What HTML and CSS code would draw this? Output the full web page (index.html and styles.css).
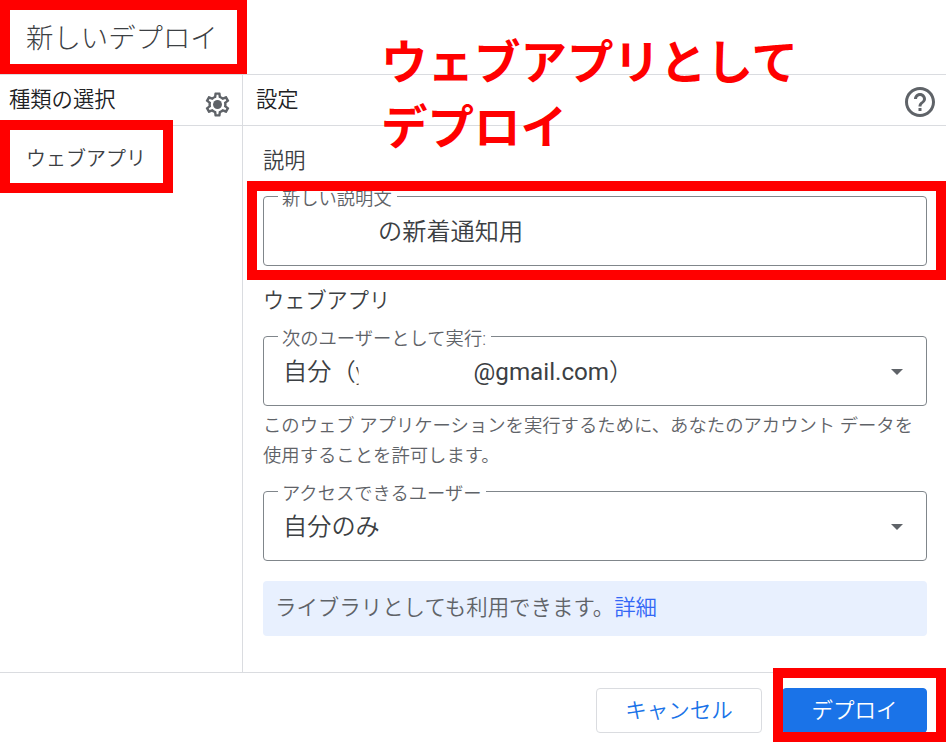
FILE: index.html
```html
<!DOCTYPE html>
<html lang="ja">

<head>
    <meta charset="UTF-8">
    <meta name="viewport" content="width=device-width, initial-scale=1.0">
    <title>新しいデプロイ</title>
    <link rel="stylesheet" href="styles.css">
</head>

<body>
    <div class="dialog">
        <header class="dialog-header">
            <h1>新しいデプロイ</h1>
        </header>
        <div class="dialog-body">
            <aside class="types">
                <div class="bar">
                    <h2>種類の選択</h2>
                    <svg class="gear" viewBox="0 0 24 24">
                        <path d="M19.43 12.98c.04-.32.07-.64.07-.98s-.03-.66-.07-.98l2.11-1.65c.19-.15.24-.42.12-.64l-2-3.46c-.09-.16-.26-.25-.44-.25-.06 0-.12.01-.17.03l-2.49 1c-.52-.4-1.08-.73-1.69-.98l-.38-2.65C14.46 2.18 14.25 2 14 2h-4c-.25 0-.46.18-.49.42l-.38 2.65c-.61.25-1.17.59-1.69.98l-2.49-1c-.06-.02-.12-.03-.18-.03-.17 0-.34.09-.43.25l-2 3.46c-.13.22-.07.49.12.64l2.11 1.65c-.04.32-.07.65-.07.98s.03.66.07.98l-2.11 1.65c-.19.15-.24.42-.12.64l2 3.46c.09.16.26.25.44.25.06 0 .12-.01.17-.03l2.49-1c.52.4 1.08.73 1.69.98l.38 2.65c.03.24.24.42.49.42h4c.25 0 .46-.18.49-.42l.38-2.65c.61-.25 1.17-.59 1.69-.98l2.49 1c.06.02.12.03.18.03.17 0 .34-.09.43-.25l2-3.46c.12-.22.07-.49-.12-.64l-2.11-1.65zm-1.98-1.71c.04.31.05.52.05.73 0 .21-.02.43-.05.73l-.14 1.13.89.7 1.08.84-.7 1.21-1.27-.51-1.04-.42-.9.68c-.43.32-.84.56-1.25.73l-1.06.43-.16 1.13-.2 1.35h-1.4l-.19-1.35-.16-1.13-1.06-.43c-.43-.18-.83-.41-1.23-.71l-.91-.7-1.06.43-1.27.51-.7-1.21 1.08-.84.89-.7-.14-1.13c-.03-.31-.05-.54-.05-.74s.02-.43.05-.73l.14-1.13-.89-.7-1.08-.84.7-1.21 1.27.51 1.04.42.9-.68c.43-.32.84-.56 1.25-.73l1.06-.43.16-1.13.2-1.35h1.39l.19 1.35.16 1.13 1.06.43c.43.18.83.41 1.23.71l.91.7 1.06-.43 1.27-.51.7 1.21-1.07.85-.89.7.14 1.13z"/>
                        <circle cx="12" cy="12" r="3.7"/>
                    </svg>
                </div>
                <p class="type-item">ウェブアプリ</p>
            </aside>
            <main class="settings">
                <div class="bar">
                    <h2>設定</h2>
                    <svg class="help" viewBox="0 0 24 24">
                        <path d="M11 18h2v-2h-2v2zm1-16C6.48 2 2 6.48 2 12s4.48 10 10 10 10-4.480 10-10S17.520 2 12 2zm0 18c-4.410 0-8-3.590-8-8s3.590-8 8-8 8 3.590 8 8-3.590 8-8 8zm0-14c-2.210 0-4 1.790-4 4h2c0-1.100.9-2 2-2s2 .9 2 2c0 2-3 1.750-3 5h2c0-2.250 3-2.500 3-5 0-2.210-1.790-4-4-4z"/>
                    </svg>
                </div>
                <div class="form">
                    <h3>説明</h3>
                    <div class="field field-description">
                        <span class="field-label">新しい説明文</span>
                        <span class="field-value">の新着通知用</span>
                    </div>
                    <h3 class="section-webapp">ウェブアプリ</h3>
                    <div class="field">
                        <span class="field-label">次のユーザーとして実行:</span>
                        <span class="field-value">自分（<span class="account">y</span><span class="domain">@gmail.com</span>）</span>
                        <i class="arrow"></i>
                    </div>
                    <p class="hint">このウェブ アプリケーションを実行するために、あなたのアカウント データを<br>使用することを許可します。</p>
                    <div class="field">
                        <span class="field-label">アクセスできるユーザー</span>
                        <span class="field-value">自分のみ</span>
                        <i class="arrow"></i>
                    </div>
                    <p class="library">ライブラリとしても利用できます。<a href="#">詳細</a></p>
                </div>
            </main>
        </div>
        <footer class="dialog-footer">
            <button class="btn">キャンセル</button>
            <button class="btn btn-primary">デプロイ</button>
        </footer>

        <!-- 注釈 -->
        <div class="frame frame-title"></div>
        <div class="frame frame-type"></div>
        <div class="frame frame-description"></div>
        <div class="frame frame-deploy"></div>
        <p class="caption">ウェブアプリとして<br>デプロイ</p>
    </div>
</body>

</html>
```
FILE: styles.css
```css
* {
    box-sizing: border-box;
}

body {
    margin: 0;
    font-family: Roboto, "Noto Sans CJK JP", sans-serif;
    font-weight: 350;
    color: #3c4043;
    background-color: #fff;
}

h1, h2, h3, p {
    margin: 0;
    font-weight: 350;
    white-space: nowrap;
}

.dialog {
    position: relative;
    display: flex;
    flex-direction: column;
    width: 946px;
    height: 742px;
    overflow: hidden;
}

.dialog-header {
    display: flex;
    align-items: center;
    height: 75px;
    padding: 0 0 2px 26px;
    border-bottom: 1px solid #dadce0;
}

.dialog-header h1 {
    font-size: 27.4px;
    font-weight: 300;
}

.dialog-body {
    display: flex;
    height: 597px;
}

.types {
    width: 243px;
    border-right: 1px solid #dadce0;
}

.settings {
    flex: 1;
}

.bar {
    display: flex;
    align-items: center;
    justify-content: space-between;
    height: 51px;
    padding: 0 10px 2px 13px;
    border-bottom: 1px solid #dadce0;
}

.types .bar {
    padding-left: 9px;
}

.bar h2 {
    margin-bottom: 4px;
    font-size: 21.3px;
    color: #202124;
}

.gear,
.help {
    fill: #5f6368;
}

.gear {
    width: 29px;
    height: 29px;
    margin-top: 11px;
}

.help {
    width: 36px;
    height: 36px;
    margin: 5px -2px 0 0;
}

.type-item {
    padding: 18px 0 0 26px;
    font-size: 20px;
    line-height: 30px;
}

.form {
    padding: 20px 19px 0 20px;
}

.form h3 {
    font-size: 21.2px;
    line-height: 30px;
}

.field {
    position: relative;
    display: flex;
    align-items: center;
    justify-content: space-between;
    height: 70px;
    padding: 2px 23px 0 19px;
    border: 1px solid #80868b;
    border-radius: 4px;
}

.field-description {
    margin-top: 20px;
    padding-left: 114px;
}

.field-label {
    position: absolute;
    top: -11px;
    left: 14px;
    padding: 0 5px 0 4px;
    background-color: #fff;
    color: #5f6368;
    font-size: 18.3px;
    line-height: 26px;
}

.field-value {
    display: flex;
    font-size: 24.2px;
    line-height: 36px;
}

/* アカウント名は伏せる */
.account {
    width: 118px;
    clip-path: inset(0 115px 0 0);
}

.domain {
    font-weight: 400;
}

.arrow {
    border: 6px solid transparent;
    border-top-color: #5f6368;
    border-bottom: 0;
}

.section-webapp {
    margin: 20px 0;
}

.hint {
    margin: 5px 0 20px;
    color: #5f6368;
    font-size: 18.35px;
    line-height: 30px;
}

.library {
    height: 55px;
    margin-top: 20px;
    padding-left: 12px;
    border-radius: 4px;
    background-color: #e8f0fe;
    color: #5f6368;
    font-size: 21.45px;
    line-height: 54px;
}

.library a {
    color: #3367f6;
    text-decoration: none;
}

.dialog-footer {
    display: flex;
    justify-content: flex-end;
    gap: 20px;
    height: 70px;
    padding: 15px 19px 0 0;
    border-top: 1px solid #dadce0;
}

.btn {
    width: 166px;
    height: 45px;
    padding: 0 0 4px;
    border: 1px solid #dadce0;
    border-radius: 4px;
    background-color: #fff;
    color: #1a73e8;
    font-family: inherit;
    font-size: 21.5px;
    font-weight: 350;
}

.btn-primary {
    width: 145px;
    border-color: #1a73e8;
    background-color: #1a73e8;
    color: #fff;
}

.frame {
    position: absolute;
    border: 10px solid #f00;
}

.frame-title {
    top: 0;
    left: 0;
    width: 247px;
    height: 74px;
}

.frame-type {
    top: 120px;
    left: 0;
    width: 173px;
    height: 73px;
}

.frame-description {
    top: 181px;
    left: 247px;
    width: 699px;
    height: 99px;
}

.frame-deploy {
    top: 668px;
    left: 773px;
    width: 173px;
    height: 74px;
}

.caption {
    position: absolute;
    top: 26px;
    left: 381px;
    color: #f00;
    font-family: "Noto Sans CJK JP", sans-serif;
    font-size: 46.5px;
    font-weight: 700;
    line-height: 65px;
}
```
